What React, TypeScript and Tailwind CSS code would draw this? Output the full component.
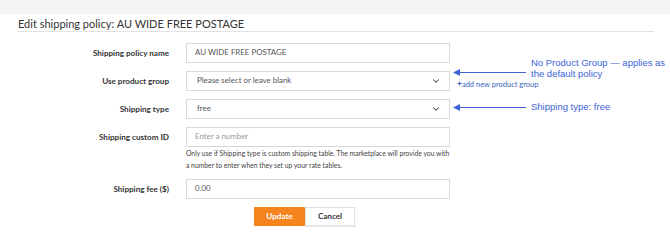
import { ChevronDown } from 'lucide-react'

const labelCls = "w-[169px] shrink-0 text-right text-[8.1px] font-bold text-[#333]"
const boxCls = "w-[264px] h-[20px] border border-[#d9d9d9] bg-white flex items-center px-[8px] text-[7.9px] text-[#555]"

function Row({ label, children, className = "" }: { label: string; children: React.ReactNode; className?: string }) {
  return (
    <div className={`flex items-center gap-[17px] ${className}`}>
      <div className={labelCls}>{label}</div>
      {children}
    </div>
  )
}

function Select({ value }: { value: string }) {
  return (
    <div className={`${boxCls} justify-between pl-[10px]`}>
      <span>{value}</span>
      <ChevronDown size={10} strokeWidth={2.5} className="text-[#444]" />
    </div>
  )
}

function Arrow() {
  return (
    <svg width="73" height="7" viewBox="0 0 73 7">
      <line x1="5" y1="3.5" x2="73" y2="3.5" stroke="#3d63d6" strokeWidth="1.2" />
      <polygon points="0,3.5 7,0 7,7" fill="#3d63d6" />
    </svg>
  )
}

export default function App() {
  return (
    <div className="w-[670px] h-[245px] bg-white font-['Lato','Open_Sans',sans-serif] relative overflow-hidden">
      <div className="h-[14px] bg-[#f4f4f4]" />
      <div className="mx-[18px] mr-[16px] border-b border-[#e3e3e3] pt-[3px]">
        <h1 className="text-[11px] leading-[12px] text-[#333] py-[1px]">Edit shipping policy: AU WIDE FREE POSTAGE</h1>
      </div>

      <div className="pt-[11px] flex flex-col gap-[8px]">
        <Row label="Shipping policy name">
          <div className={boxCls}>AU WIDE FREE POSTAGE</div>
        </Row>
        <Row label="Use product group" className="relative">
          <Select value="Please select or leave blank" />
          <span className="absolute left-[457px] top-[8px] text-[7.5px] leading-[10px] text-[#3d5fb8] whitespace-nowrap">
            <span className="font-bold text-[8.5px]">+</span>add new product group
          </span>
        </Row>
        <Row label="Shipping type">
          <Select value="free" />
        </Row>
        <div>
          <Row label="Shipping custom ID">
            <div className={`${boxCls} text-[#999]`}>Enter a number</div>
          </Row>
          <p className="ml-[186px] w-[264px] text-[6.8px] leading-[12px] text-[#444]">
            Only use if Shipping type is custom shipping table. The marketplace will provide you with a number to enter when they set up your rate tables.
          </p>
        </div>
        <Row label="Shipping fee ($)">
          <div className={boxCls}>0.00</div>
        </Row>
        <div className="flex ml-[254px]">
          <button className="w-[51px] h-[19px] bg-[#f5841f] text-white text-[8.1px] font-bold rounded-[1px]">Update</button>
          <button className="w-[50px] h-[19px] bg-white border border-[#e0e0e0] text-[#333] text-[8.1px] font-bold shadow-[0_1px_1px_rgba(0,0,0,0.08)]">Cancel</button>
        </div>
      </div>

      {/* annotation callouts */}
      <div className="absolute left-[453px] top-[69px]"><Arrow /></div>
      <div className="absolute left-[531px] top-[57px] font-['Liberation_Sans',Arial,sans-serif] text-[9.5px] leading-[11px] text-[#3d63d6]">
        No Product Group — applies as<br />the default policy
      </div>
      <div className="absolute left-[453px] top-[104px]"><Arrow /></div>
      <div className="absolute left-[531px] top-[101px] font-['Liberation_Sans',Arial,sans-serif] text-[9.5px] leading-[11px] text-[#3d63d6]">
        Shipping type: free
      </div>
    </div>
  )
}
